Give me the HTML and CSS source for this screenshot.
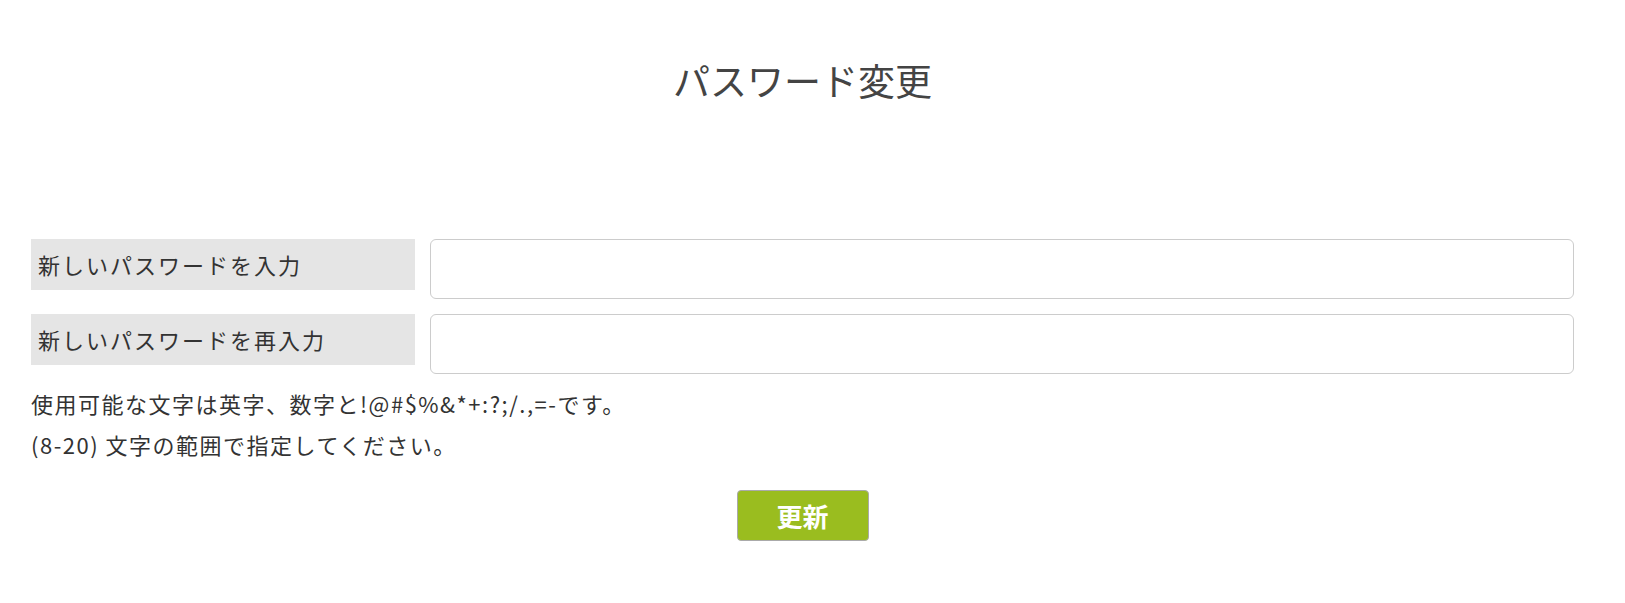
FILE: index.html
```html
<!DOCTYPE html>
<html lang="ja">

<head>
    <meta charset="UTF-8">
    <meta name="viewport" content="width=device-width, initial-scale=1.0">
    <title>パスワード変更</title>
    <link rel="stylesheet" href="styles.css">
</head>

<body>
    <div class="container">
        <h1 class="title">パスワード変更</h1>
        <form class="pw-form" onsubmit="return false;">
            <div class="row">
                <label class="label" for="newPw">新しいパスワードを入力</label>
                <input type="password" class="field" id="newPw">
            </div>
            <div class="row">
                <label class="label" for="newPw2">新しいパスワードを再入力</label>
                <input type="password" class="field" id="newPw2">
            </div>
            <p class="note">使用可能な文字は英字、数字と!@#$%&amp;*+:?;/.,=-です。<br>(8-20) 文字の範囲で指定してください。</p>
            <div class="actions">
                <button type="submit" class="btn">更新</button>
            </div>
        </form>
    </div>
</body>

</html>
```

FILE: styles.css
```css
* {
    margin: 0;
    padding: 0;
    box-sizing: border-box;
}

body {
    font-family: "Noto Sans CJK JP", "Noto Sans", sans-serif;
    color: #333;
    background-color: white;
}

.container {
    width: 1543px;
    margin-left: 31px;
    padding-top: 52px;
}

.title {
    text-align: center;
    font-size: 37px;
    font-weight: 400;
    color: #444;
    line-height: 56px;
    margin-bottom: 131px;
}

.row {
    display: flex;
    align-items: flex-start;
    gap: 15px;
    margin-bottom: 15px;
}

.label {
    width: 384px;
    height: 51px;
    background-color: #e5e5e5;
    font-size: 22px;
    letter-spacing: 2px;
    line-height: 51px;
    padding-left: 7px;
    color: #333;
}

.field {
    flex: 1;
    height: 60px;
    border: 1px solid #ccc;
    border-radius: 6px;
    outline: none;
    font-size: 20px;
    padding: 0 10px;
}

.note {
    font-size: 22px;
    letter-spacing: 1.5px;
    line-height: 41px;
    color: #333;
    margin-top: -6px;
}

.actions {
    display: flex;
    justify-content: center;
    margin-top: 25px;
}

.btn {
    width: 132px;
    height: 51px;
    background-color: #9abd1f;
    border: 1px solid #aaa;
    border-radius: 4px;
    color: white;
    font-family: "Noto Sans CJK JP", sans-serif;
    font-size: 26px;
    font-weight: 700;
    cursor: pointer;
}
```
